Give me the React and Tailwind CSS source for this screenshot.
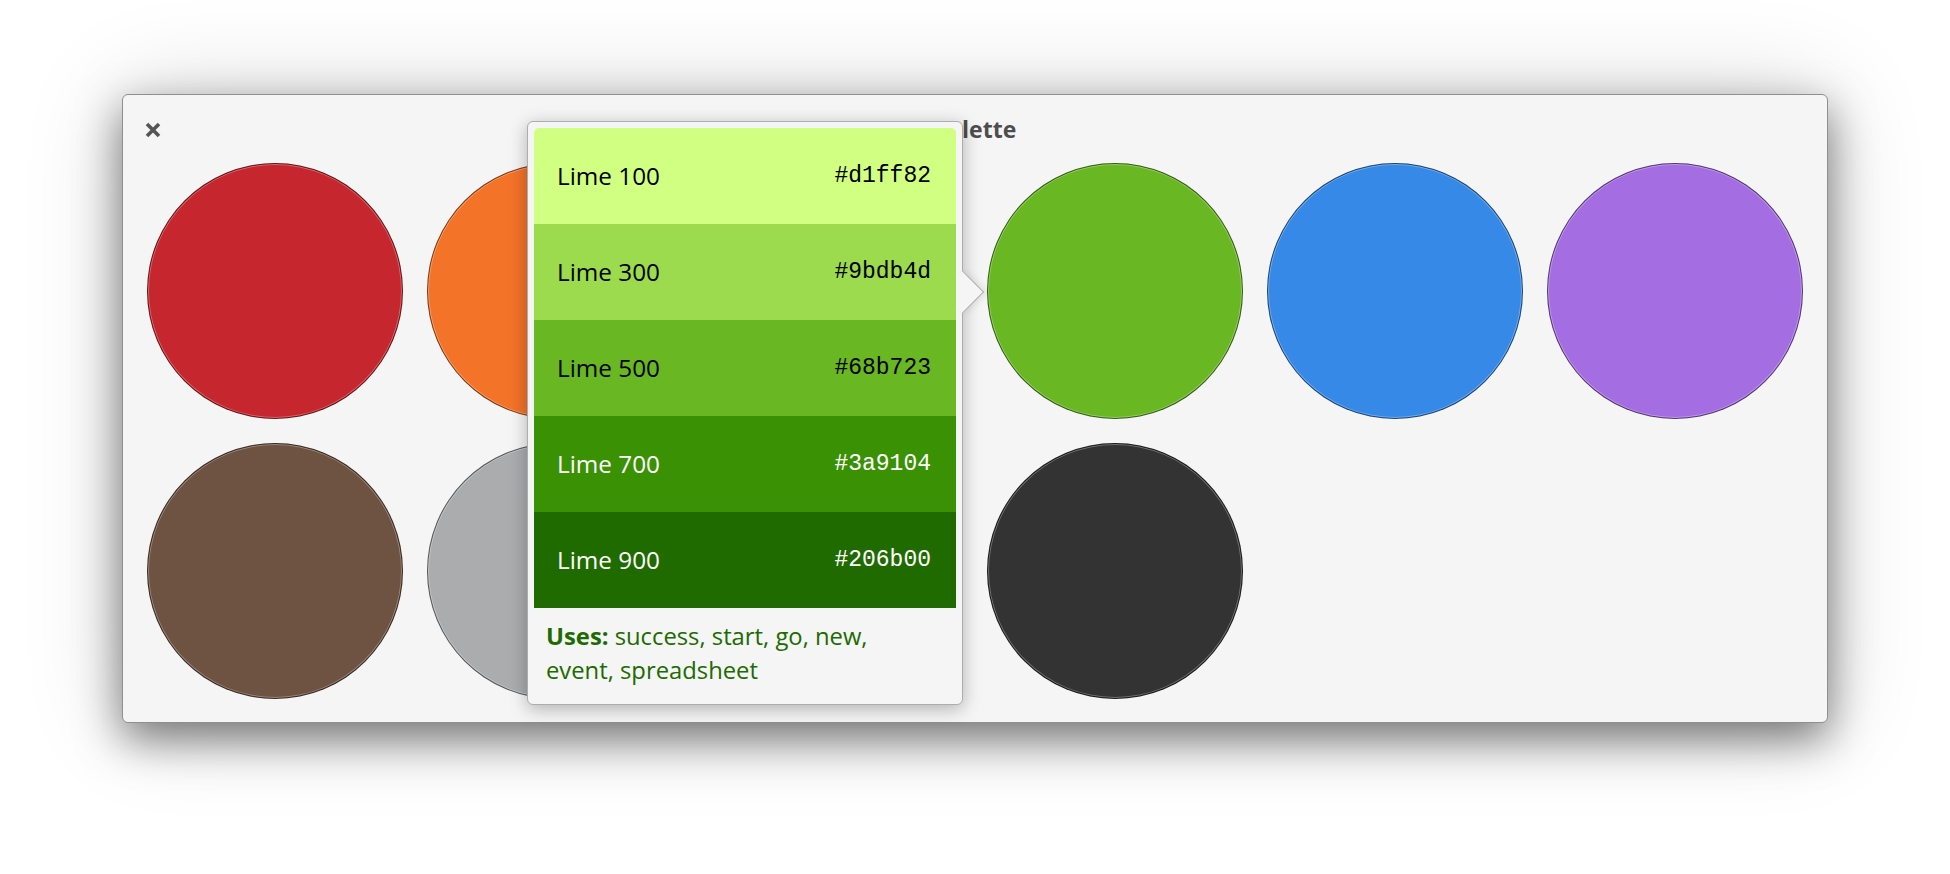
import React from "react";

const circles = [
  "bg-[#c6262e]",
  "bg-[#f37329]",
  "bg-[#f9c440]",
  "bg-[#68b723]",
  "bg-[#3689e6]",
  "bg-[#a56de2]",
  "bg-[#6e5242]",
  "bg-[#abacae]",
  "bg-[#485a6c]",
  "bg-[#333333]",
];

const shades = [
  { name: "Lime 100", hex: "#d1ff82", bg: "bg-[#d1ff82]", text: "text-black" },
  { name: "Lime 300", hex: "#9bdb4d", bg: "bg-[#9bdb4d]", text: "text-black" },
  { name: "Lime 500", hex: "#68b723", bg: "bg-[#68b723]", text: "text-black" },
  { name: "Lime 700", hex: "#3a9104", bg: "bg-[#3a9104]", text: "text-white" },
  { name: "Lime 900", hex: "#206b00", bg: "bg-[#206b00]", text: "text-white" },
];

function Swatch({ color }) {
  return (
    <div
      className={`w-[256px] h-[256px] rounded-full border border-black/50 shadow-[inset_0_0_0_1px_rgba(255,255,255,0.3)] ${color}`}
    />
  );
}

function Popover() {
  return (
    <div className="absolute left-[404px] top-[26px] w-[436px] bg-[#f5f5f5] border border-[#adadad] rounded-[6px] p-[6px] shadow-[0_4px_18px_rgba(0,0,0,0.28)] font-['Open_Sans',sans-serif]">
      {/* arrow pointing at the lime circle */}
      <div className="absolute right-[-16px] top-[155px] w-[30px] h-[30px] rotate-45 bg-[#f5f5f5] border-t border-r border-[#adadad] shadow-[3px_-3px_6px_rgba(0,0,0,0.08)]" />
      <div className="relative z-10 rounded-t-[5px] overflow-hidden">
        {shades.map((s) => (
          <div
            key={s.name}
            className={`h-[96px] flex items-center justify-between pl-[23px] pr-[25px] ${s.bg} ${s.text}`}
          >
            <span className="text-[24.3px]">{s.name}</span>
            <span className="text-[23px] font-['Liberation_Mono',monospace]">{s.hex}</span>
          </div>
        ))}
      </div>
      <p className="relative z-10 px-[12px] pt-[11px] pb-[11px] text-[23.8px] leading-[34px] text-[#206b00]">
        <b className="font-bold">Uses:</b> success, start, go, new,
        <br />
        event, spreadsheet
      </p>
    </div>
  );
}

export default function App() {
  return (
    <div className="min-h-[874px] bg-white pt-[94px] pl-[122px]">
      <div className="relative w-[1706px] bg-[#f5f5f5] border border-[#8f8f8f] rounded-[6px] shadow-[0_16px_44px_rgba(0,0,0,0.5),0_0_100px_rgba(0,0,0,0.16)] px-[24px] pb-[23px]">
        <div className="relative h-[68px] flex items-center justify-center">
          <button className="absolute left-[-2px] top-[27px] w-[16px] h-[16px] text-[#555]" aria-label="Close">
            <svg viewBox="0 0 16 16" className="w-[16px] h-[16px]" fill="none" stroke="currentColor" strokeWidth="3.6">
              <path d="M2 2l12 12M14 2L2 14" />
            </svg>
          </button>
          <h1 className="text-[23px] font-bold text-[#4d4d4d] font-['Open_Sans',sans-serif]">Palette</h1>
        </div>
        <div className="grid grid-cols-[repeat(6,256px)] gap-[24px]">
          {circles.map((c) => (
            <Swatch key={c} color={c} />
          ))}
        </div>
        <Popover />
      </div>
    </div>
  );
}
